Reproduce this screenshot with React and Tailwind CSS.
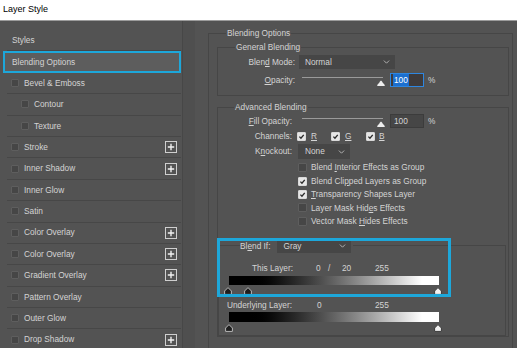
const styleRows = [
  { label: "Bevel & Emboss" },
  { label: "Contour", indent: true },
  { label: "Texture", indent: true },
  { label: "Stroke", plus: true },
  { label: "Inner Shadow", plus: true },
  { label: "Inner Glow" },
  { label: "Satin" },
  { label: "Color Overlay", plus: true },
  { label: "Color Overlay", plus: true },
  { label: "Gradient Overlay", plus: true },
  { label: "Pattern Overlay" },
  { label: "Outer Glow" },
  { label: "Drop Shadow", plus: true },
];

const advancedChecks = [
  { checked: false, label: <>Blend <u>I</u>nterior Effects as Group</> },
  { checked: true, label: <>Blend Cli<u>p</u>ped Layers as Group</> },
  { checked: true, label: <><u>T</u>ransparency Shapes Layer</> },
  { checked: false, label: <>Layer Mask Hid<u>e</u>s Effects</> },
  { checked: false, label: <>Vector Mask <u>H</u>ides Effects</> },
];

function Box({ checked, className = "" }) {
  return (
    <span
      className={`flex shrink-0 items-center justify-center rounded-[1px] border ${
        checked ? "border-[#d8d8d8] bg-[#e6e6e6]" : "border-[#5e5e5e] bg-[#464646]"
      } ${className}`}
    >
      {checked && (
        <svg viewBox="0 0 10 10" className="h-full w-full">
          <path d="M2 5.2 L4.2 7.4 L8.2 2.6" fill="none" stroke="#2a2a2a" strokeWidth="1.9" />
        </svg>
      )}
    </span>
  );
}

function PlusButton() {
  return (
    <span className="ml-auto flex h-[12px] w-[12px] items-center justify-center border border-[#cfcfcf]">
      <svg viewBox="0 0 10 10" className="h-[8px] w-[8px]">
        <path d="M5 1 V9 M1 5 H9" stroke="#f2f2f2" strokeWidth="1.7" />
      </svg>
    </span>
  );
}

function Select({ value, className = "" }) {
  return (
    <div className={`flex items-center justify-between bg-[#464646] pr-[5px] ${className}`}>
      <span>{value}</span>
      <svg viewBox="0 0 8 5" className="h-[4px] w-[7px]">
        <path d="M0.7 0.7 L4 4 L7.3 0.7" fill="none" stroke="#bdbdbd" strokeWidth="1.1" />
      </svg>
    </div>
  );
}

function Slider() {
  return (
    <div className="relative h-[14px] w-[81px]">
      <div className="absolute left-0 right-0 top-[4px] h-[1px] bg-[#9a9a9a]" />
      <svg viewBox="0 0 10 8" className="absolute left-[74px] top-[6px] h-[8px] w-[10px]">
        <path d="M1.2 7 C1 5 3 4.5 3.6 3.2 C4.2 1.2 5.8 1.2 6.4 3.2 C7 4.5 9 5 8.8 7 Z" fill="#ededed" />
      </svg>
    </div>
  );
}

function Handle({ light, className = "" }) {
  return (
    <svg viewBox="0 0 8 8" className={`absolute top-0 h-[8px] w-[8px] ${className}`}>
      <path
        d="M4 0.6 L7.4 4 V7.4 H0.6 V4 Z"
        fill={light ? "#f1f1f1" : "#1e1e1e"}
        stroke={light ? "#3a3a3a" : "#b8b8b8"}
        strokeWidth="1"
      />
    </svg>
  );
}

function StylesList() {
  return (
    <div className="flex w-[183px] shrink-0 flex-col border-r border-[#474747] pl-[7px] pr-[1px] pt-[9px]">
      <div className="flex h-[21.4px] shrink-0 items-center border-b border-[#474747] pl-[5px]">Styles</div>
      <div className="-ml-[4px] flex h-[21.4px] shrink-0 items-center border-2 border-[#1da7da] bg-[#5d5d5d] pl-[7px]">
        Blending Options
      </div>
      {styleRows.map((row, i) => (
        <div
          key={i}
          className={`flex h-[21.4px] shrink-0 items-center border-b border-[#474747] pr-[4px] ${
            row.indent ? "pl-[14px]" : "pl-[4px]"
          }`}
        >
          <Box className="h-[8px] w-[8px]" />
          <span className="ml-[5px]">{row.label}</span>
          {row.plus && <PlusButton />}
        </div>
      ))}
    </div>
  );
}

function GeneralBlending() {
  return (
    <fieldset className="w-[292px] border border-[#464646]">
      <legend className="ml-[17px] px-[1px] leading-[12px]">General Blending</legend>
      <div className="flex flex-col gap-[4px] pb-[8px] pt-[2px]">
        <div className="flex h-[14px] items-center">
          <span className="w-[77px] text-right">Blen<u>d</u> Mode:</span>
          <Select value="Normal" className="ml-[4px] h-[14px] w-[96px] pl-[6px]" />
        </div>
        <div className="flex h-[14px] items-center">
          <span className="w-[77px] text-right"><u>O</u>pacity:</span>
          <div className="ml-[7px]">
            <Slider />
          </div>
          <div className="ml-[7px] flex h-[14px] w-[34px] items-center border border-[#2e86e0] bg-[#3f3b3b] pl-[2px]">
            <span className="bg-[#1c6fcf] px-[1px] text-white">100</span>
          </div>
          <span className="ml-[4px]">%</span>
        </div>
      </div>
    </fieldset>
  );
}

function BlendIf() {
  return (
    <div className="relative mr-[2px] mt-[11px]">
      <fieldset className="border border-[#464646] pb-[3px]">
        <legend className="ml-[21px] flex h-[14px] items-center pr-[2px]">
          <span>Bl<u>e</u>nd If:</span>
          <Select value="Gray" className="ml-[7px] h-[14px] w-[74px] pl-[6px]" />
        </legend>
        <div className="mt-[9px] flex h-[12px] items-center pl-[33px]">
          <span className="w-[64px]">This Layer:</span>
          <span className="w-[12px]">0</span>
          <span className="w-[14px]">/</span>
          <span className="w-[33px]">20</span>
          <span>255</span>
        </div>
        <div className="ml-[10px] mt-[2px] h-[9px] w-[210px] bg-linear-to-r from-black from-8% to-white to-92%" />
        <div className="relative ml-[10px] mt-[2px] h-[8px] w-[210px]">
          <Handle className="left-[-5px]" />
          <Handle className="left-[15px]" />
          <Handle light className="left-[205px]" />
        </div>
        <div className="mt-[4px] flex h-[12px] items-center pl-[8px]">
          <span className="w-[90px]">Underlying Layer:</span>
          <span className="w-[58px]">0</span>
          <span>255</span>
        </div>
        <div className="ml-[10px] mt-[1px] h-[10px] w-[210px] bg-linear-to-r from-black from-8% to-white to-92%" />
        <div className="relative ml-[10px] mt-[2px] h-[8px] w-[210px]">
          <Handle className="left-[-4px]" />
          <Handle light className="left-[205px]" />
        </div>
      </fieldset>
      <div className="pointer-events-none absolute left-[-1px] top-[-1px] h-[59px] w-[234px] border-[3px] border-[#1da7da]" />
    </div>
  );
}

function AdvancedBlending() {
  return (
    <fieldset className="mt-[5px] w-[292px] border border-[#464646]">
      <legend className="ml-[16px] px-[1px] leading-[12px]">Advanced Blending</legend>
      <div className="mt-[1px] flex h-[14px] items-center">
        <span className="w-[74px] text-right"><u>F</u>ill Opacity:</span>
        <div className="ml-[10px]">
          <Slider />
        </div>
        <div className="ml-[7px] flex h-[14px] w-[34px] items-center border border-[#3c3c3c] bg-[#464646] pl-[3px]">
          100
        </div>
        <span className="ml-[4px]">%</span>
      </div>
      <div className="mt-[1px] flex h-[14px] items-center">
        <span className="w-[74px] text-right">Channels:</span>
        <div className="ml-[5px] flex w-[34px] items-center">
          <Box checked className="h-[9px] w-[9px]" />
          <u className="ml-[5px]">R</u>
        </div>
        <div className="flex w-[35px] items-center">
          <Box checked className="h-[9px] w-[9px]" />
          <u className="ml-[5px]">G</u>
        </div>
        <div className="flex items-center">
          <Box checked className="h-[9px] w-[9px]" />
          <u className="ml-[4px]">B</u>
        </div>
      </div>
      <div className="mt-[1px] flex h-[15px] items-center">
        <span className="w-[74px] text-right">K<u>n</u>ockout:</span>
        <Select value="None" className="ml-[6px] h-[15px] w-[52px] pl-[7px]" />
      </div>
      <div className="mt-[2px] flex flex-col pl-[80px]">
        {advancedChecks.map((c, i) => (
          <div key={i} className="flex h-[13.4px] items-center">
            <Box checked={c.checked} className="h-[9px] w-[9px]" />
            <span className="ml-[4px]">{c.label}</span>
          </div>
        ))}
      </div>
      <BlendIf />
    </fieldset>
  );
}

export default function App() {
  return (
    <div className="h-[348px] w-[517px] overflow-hidden bg-[#535353] font-['Liberation_Sans',Arial,sans-serif] text-[8.3px] text-[#d4d4d4]">
      <div className="flex h-[21px] items-center border-b border-[#9c9c9c] bg-white pl-[3px] text-[9px] text-black">
        Layer Style
      </div>
      <div className="flex h-[327px]">
        <StylesList />
        <div className="w-[12px] shrink-0 bg-[#4f4f4f]" />
        <div className="flex-1 pl-[13px] pt-[6px]">
          <fieldset className="h-[340px] w-[305px] border border-[#464646]">
            <legend className="ml-[17px] px-[1px] leading-[12px]">Blending Options</legend>
            <div className="pl-[8px] pt-[2px]">
              <GeneralBlending />
              <AdvancedBlending />
            </div>
          </fieldset>
        </div>
      </div>
    </div>
  );
}
